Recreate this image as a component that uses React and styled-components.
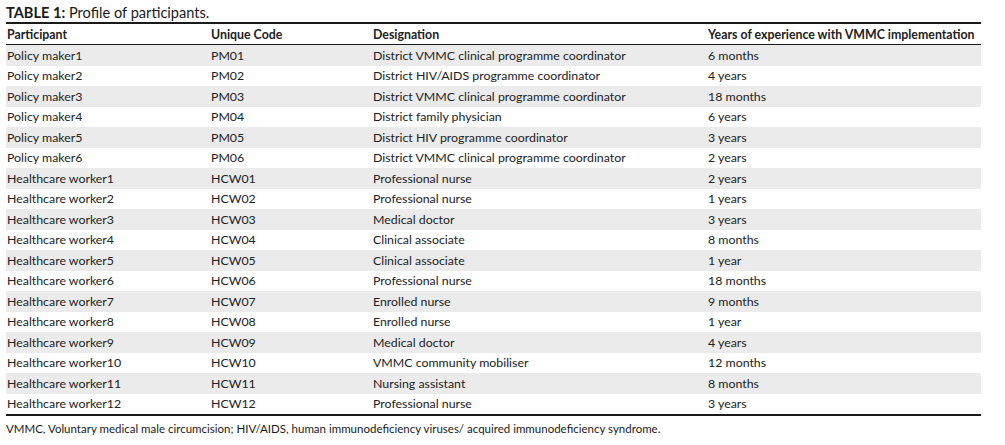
import React from 'react';
import styled, { createGlobalStyle } from 'styled-components';

const GlobalStyle = createGlobalStyle`
  body {
    margin: 0;
    background: #ffffff;
    font-family: Lato, "Open Sans", sans-serif;
    color: #222222;
  }
`;

const Wrapper = styled.div`
  padding: 4px 24px 0 6px;
  width: 975px;
`;

const Caption = styled.div`
  font-size: 14.6px;
  line-height: 18px;
  height: 18px;
  color: #1a1a1a;

  b {
    font-weight: 700;
  }
`;

const Table = styled.table`
  width: 975px;
  border-collapse: collapse;
  table-layout: fixed;
  border-top: 2px solid #1a1a1a;
  border-bottom: 2px solid #1a1a1a;
  font-size: 12.35px;
`;

const HeadCell = styled.th`
  text-align: left;
  font-weight: 700;
  height: 20px;
  padding: 0 0 0 1px;
  border-bottom: 1px solid #1a1a1a;
  white-space: nowrap;
`;

const Row = styled.tr`
  background: ${(p) => (p.$shaded ? '#ebebeb' : '#ffffff')};
`;

const Cell = styled.td`
  height: 20.5px;
  padding: 0 0 0 1px;
  white-space: nowrap;
`;

const Note = styled.div`
  font-size: 11.5px;
  line-height: 14px;
  margin-top: 6px;
  color: #1a1a1a;
`;

const rows = [
  ['Policy maker1', 'PM01', 'District VMMC clinical programme coordinator', '6 months'],
  ['Policy maker2', 'PM02', 'District HIV/AIDS programme coordinator', '4 years'],
  ['Policy maker3', 'PM03', 'District VMMC clinical programme coordinator', '18 months'],
  ['Policy maker4', 'PM04', 'District family physician', '6 years'],
  ['Policy maker5', 'PM05', 'District HIV programme coordinator', '3 years'],
  ['Policy maker6', 'PM06', 'District VMMC clinical programme coordinator', '2 years'],
  ['Healthcare worker1', 'HCW01', 'Professional nurse', '2 years'],
  ['Healthcare worker2', 'HCW02', 'Professional nurse', '1 years'],
  ['Healthcare worker3', 'HCW03', 'Medical doctor', '3 years'],
  ['Healthcare worker4', 'HCW04', 'Clinical associate', '8 months'],
  ['Healthcare worker5', 'HCW05', 'Clinical associate', '1 year'],
  ['Healthcare worker6', 'HCW06', 'Professional nurse', '18 months'],
  ['Healthcare worker7', 'HCW07', 'Enrolled nurse', '9 months'],
  ['Healthcare worker8', 'HCW08', 'Enrolled nurse', '1 year'],
  ['Healthcare worker9', 'HCW09', 'Medical doctor', '4 years'],
  ['Healthcare worker10', 'HCW10', 'VMMC community mobiliser', '12 months'],
  ['Healthcare worker11', 'HCW11', 'Nursing assistant', '8 months'],
  ['Healthcare worker12', 'HCW12', 'Professional nurse', '3 years'],
];

export default function App() {
  return (
    <>
      <GlobalStyle />
      <Wrapper>
        <Caption>
          <b>TABLE 1:</b> Profile of participants.
        </Caption>
        <Table>
          <colgroup>
            <col style={{ width: 204 }} />
            <col style={{ width: 162 }} />
            <col style={{ width: 335 }} />
            <col />
          </colgroup>
          <thead>
            <tr>
              <HeadCell>Participant</HeadCell>
              <HeadCell>Unique Code</HeadCell>
              <HeadCell>Designation</HeadCell>
              <HeadCell>Years of experience with VMMC implementation</HeadCell>
            </tr>
          </thead>
          <tbody>
            {rows.map((r, i) => (
              <Row key={r[1]} $shaded={i % 2 === 0}>
                {r.map((c, j) => (
                  <Cell key={j}>{c}</Cell>
                ))}
              </Row>
            ))}
          </tbody>
        </Table>
        <Note>
          VMMC, Voluntary medical male circumcision; HIV/AIDS, human immunodeficiency viruses/ acquired immunodeficiency syndrome.
        </Note>
      </Wrapper>
    </>
  );
}
